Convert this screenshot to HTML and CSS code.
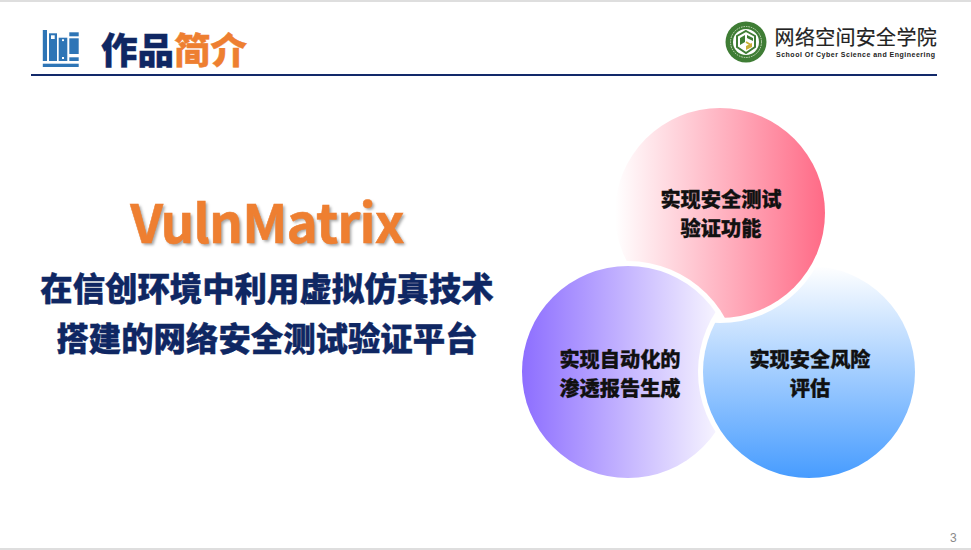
FILE: index.html
```html
<!DOCTYPE html>
<html lang="zh-CN">
<head>
  <meta charset="UTF-8" />
  <meta name="viewport" content="width=device-width, initial-scale=1.0" />
  <title>作品简介</title>
  <link rel="stylesheet" href="styles.css">
</head>
<body>
  <div class="slide">
    <header class="head">
      <div class="head-left">
        <svg class="books" width="38" height="38" viewBox="0 0 38 38">
          <g fill="#2e75b6">
            <rect x="0.8" y="0" width="4.2" height="31" />
            <rect x="7" y="3.3" width="8" height="27.7" />
            <rect x="16.7" y="7.7" width="8.6" height="23.3" />
            <rect x="27.3" y="2.3" width="9.4" height="4" />
            <rect x="27.3" y="8.3" width="9.4" height="15.7" />
            <rect x="27.3" y="27.3" width="9.4" height="3.7" />
            <rect x="0.8" y="33.7" width="35.9" height="3.3" />
          </g>
          <g fill="#fff">
            <rect x="9" y="5.3" width="3.7" height="3.7" />
            <rect x="20" y="9.3" width="2" height="1.8" />
            <rect x="20" y="27" width="2" height="2" />
          </g>
        </svg>
        <h1 class="title">作品<span class="accent">简介</span></h1>
      </div>
      <div class="brand">
        <svg class="seal" width="42" height="42" viewBox="0 0 42 42">
          <circle cx="21" cy="21" r="20.5" fill="#3f7d35" />
          <circle cx="21" cy="21" r="15.5" fill="none" stroke="#cfe0c4" stroke-width="1" stroke-dasharray="1.5 1" />
          <circle cx="21" cy="21" r="13" fill="#fff" />
          <path d="M21 10l9 5v11l-9 6-9-6V15z" fill="none" stroke="#3f7d35" stroke-width="2" />
          <path d="M15 17l5-3v7l-5 3zM22 14l6 3v3l-6-3z" fill="#3f7d35" />
          <path d="M27 22v4l-6 3v-4z" fill="#c9b037" />
          <path d="M21 21l5 3" stroke="#c9b037" stroke-width="2" fill="none" />
        </svg>
        <div class="brand-text">
          <div class="brand-cn">网络空间安全学院</div>
          <div class="brand-en">School Of Cyber Science and Engineering</div>
        </div>
      </div>
    </header>

    <main class="body">
      <section class="intro">
        <h2 class="product">VulnMatrix</h2>
        <p class="tagline">在信创环境中利用虚拟仿真技术</p>
        <p class="tagline">搭建的网络安全测试验证平台</p>
      </section>

      <section class="venn">
        <svg class="venn-art" width="420" height="400" viewBox="0 0 420 400">
          <defs>
            <linearGradient id="gPink" x1="0" y1="0" x2="1" y2="0">
              <stop offset="0" stop-color="#fff" />
              <stop offset="1" stop-color="#ff6a86" />
            </linearGradient>
            <linearGradient id="gPurple" x1="0" y1="0" x2="1" y2="0">
              <stop offset="0" stop-color="#8d6eff" />
              <stop offset="1" stop-color="#fff" />
            </linearGradient>
            <linearGradient id="gBlue" x1="0" y1="0" x2="0" y2="1">
              <stop offset="0" stop-color="#fff" />
              <stop offset="1" stop-color="#479cff" />
            </linearGradient>
            <mask id="cutPink">
              <rect width="420" height="400" fill="#fff" />
              <circle cx="108" cy="282" r="111" fill="#000" />
            </mask>
            <mask id="cutPurple">
              <rect width="420" height="400" fill="#fff" />
              <circle cx="289" cy="282" r="111" fill="#000" />
            </mask>
            <mask id="cutBlue">
              <rect width="420" height="400" fill="#fff" />
              <circle cx="200" cy="123" r="110" fill="#000" />
            </mask>
          </defs>
          <circle cx="200" cy="123" r="105" fill="url(#gPink)" mask="url(#cutPink)" />
          <circle cx="108" cy="282" r="106" fill="url(#gPurple)" mask="url(#cutPurple)" />
          <circle cx="289" cy="282" r="106" fill="url(#gBlue)" mask="url(#cutBlue)" />
        </svg>
        <div class="bubble bubble-pink">实现安全测试<br>验证功能</div>
        <div class="bubble bubble-purple">实现自动化的<br>渗透报告生成</div>
        <div class="bubble bubble-blue">实现安全风险<br>评估</div>
      </section>
    </main>

    <footer class="foot">3</footer>
  </div>
</body>
</html>
```

FILE: styles.css
```css
html, body {
  margin: 0;
  background: #fff;
}
.slide {
  width: 971px;
  height: 550px;
  box-sizing: border-box;
  border-top: 2px solid #dedede;
  border-bottom: 2px solid #dedede;
  display: flex;
  flex-direction: column;
  overflow: hidden;
  font-family: "Noto Sans CJK SC", "Noto Sans", sans-serif;
}
.head {
  height: 74px;
  flex: none;
  box-sizing: border-box;
  margin: 0 34px 0 31px;
  padding: 0 0 3px 11px;
  border-bottom: 2px solid #12296a;
  display: flex;
  justify-content: space-between;
  align-items: flex-end;
}
.head-left {
  display: flex;
  align-items: center;
  gap: 21px;
}
.title {
  margin: 0;
  font-size: 36.5px;
  font-weight: 900;
  line-height: 44px;
  color: #0f2763;
  -webkit-text-stroke: 0.4px currentColor;
}
.accent {
  color: #ee7f31;
}
.brand {
  display: flex;
  align-items: center;
  gap: 8px;
  margin-bottom: 8px;
}
.brand-text {
  display: flex;
  flex-direction: column;
  align-items: center;
  padding-top: 1px;
}
.brand-cn {
  font-size: 20px;
  line-height: 24px;
  color: #222;
  letter-spacing: 0.3px;
  -webkit-text-stroke: 0.2px currentColor;
}
.brand-en {
  font-family: "Liberation Sans", sans-serif;
  font-size: 7px;
  font-weight: bold;
  line-height: 11px;
  letter-spacing: 0.5px;
  color: #222;
  white-space: nowrap;
}
.body {
  flex: 1;
  display: flex;
  min-height: 0;
}
.intro {
  width: 534px;
  flex: none;
  padding-top: 109px;
  box-sizing: border-box;
  text-align: center;
}
.product {
  margin: 0 0 7px;
  font-size: 53px;
  font-weight: bold;
  line-height: 70px;
  letter-spacing: -0.9px;
  color: #ee7f31;
  -webkit-text-stroke: 0.5px currentColor;
  text-shadow: 2px 2px 3px rgba(0, 0, 0, 0.35);
}
.tagline {
  margin: 0;
  font-size: 32.4px;
  font-weight: 900;
  line-height: 50px;
  color: #0f2763;
  white-space: nowrap;
  -webkit-text-stroke: 0.4px currentColor;
}
.venn {
  position: relative;
  flex: 1;
}
.venn-art {
  position: absolute;
  left: -14px;
  top: 14px;
}
.bubble {
  position: absolute;
  width: 160px;
  text-align: center;
  font-size: 20.2px;
  font-weight: 900;
  line-height: 29px;
  color: #111;
  -webkit-text-stroke: 0.3px currentColor;
}
.bubble-pink {
  left: 107px;
  top: 108px;
}
.bubble-purple {
  left: 6px;
  top: 268px;
}
.bubble-blue {
  left: 196px;
  top: 268px;
}
.foot {
  position: absolute;
  left: 950px;
  top: 531px;
  font-family: "Liberation Sans", sans-serif;
  font-size: 12px;
  line-height: 14px;
  color: #8a8a8a;
}
```
